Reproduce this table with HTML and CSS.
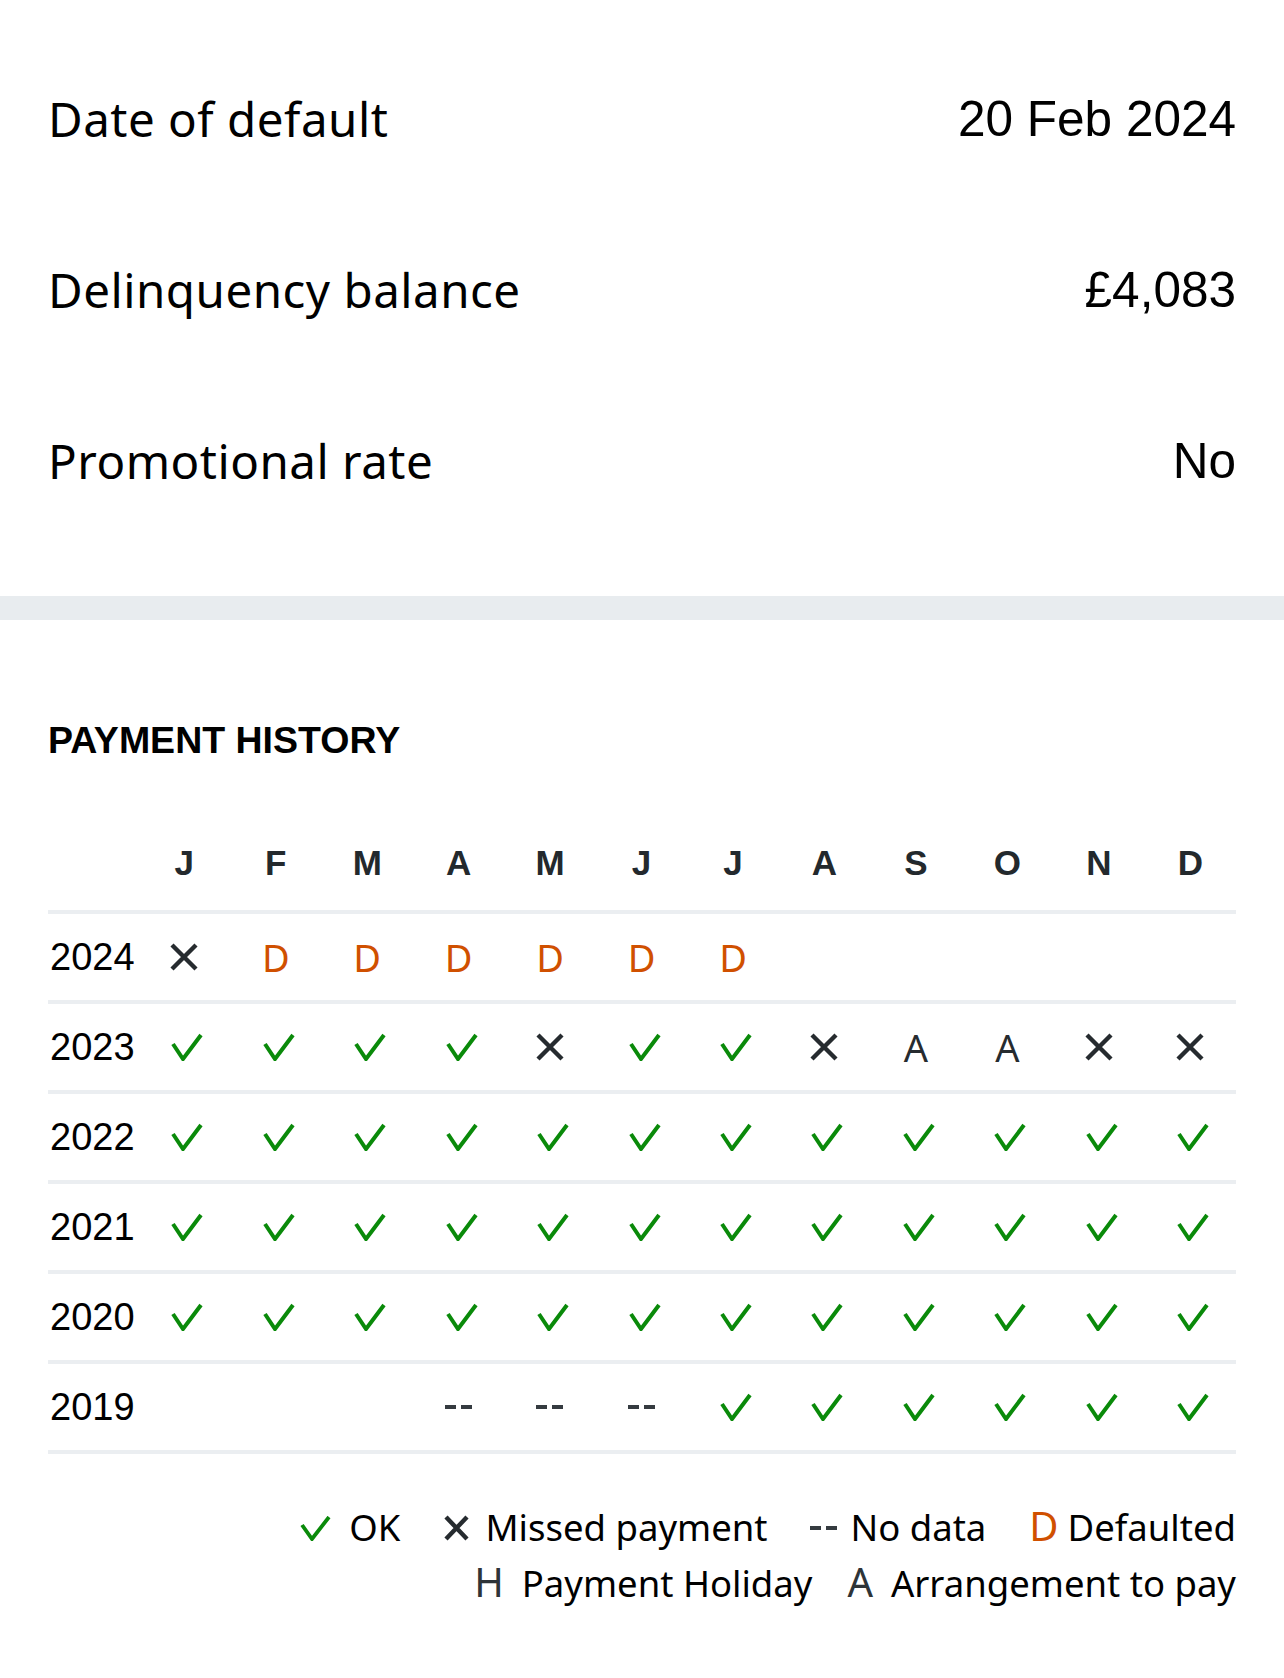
FILE: index.html
```html
<!DOCTYPE html>
<html lang="en">
<head>
<meta charset="utf-8">
<title>Account details</title>
<link rel="stylesheet" href="styles.css">
</head>
<body>
<main class="page">
  <section class="details">
    <div class="detail-row"><span class="label">Date of default</span><span class="value">20 Feb 2024</span></div>
    <div class="detail-row"><span class="label">Delinquency balance</span><span class="value">£4,083</span></div>
    <div class="detail-row"><span class="label">Promotional rate</span><span class="value">No</span></div>
  </section>
  <div class="band"></div>
  <section class="history">
    <h2 class="history-title">PAYMENT HISTORY</h2>
    <div class="grid">
      <div class="grid-row grid-head">
        <span></span>
        <span class="m">J</span><span class="m">F</span><span class="m">M</span><span class="m">A</span><span class="m">M</span><span class="m">J</span>
        <span class="m">J</span><span class="m">A</span><span class="m">S</span><span class="m">O</span><span class="m">N</span><span class="m">D</span>
      </div>
      <div class="grid-row" id="r2024"></div>
      <div class="grid-row" id="r2023"></div>
      <div class="grid-row" id="r2022"></div>
      <div class="grid-row" id="r2021"></div>
      <div class="grid-row" id="r2020"></div>
      <div class="grid-row" id="r2019"></div>
    </div>
    <div class="legend">
      <div class="legend-line">
        <span class="lg-item"><svg class="lg-check" width="31" height="25" viewBox="0 0 31 25"><polyline points="2,9 12,23 29,1" fill="none" stroke="#0a8a0a" stroke-width="3.8"/></svg><span class="lg-text gap18">OK</span></span>
        <span class="lg-item"><svg class="lg-x" width="27" height="26" viewBox="0 0 27 26"><path d="M3 2 L24 24 M24 2 L3 24" stroke="#262b2f" stroke-width="4.4" fill="none"/></svg><span class="lg-text gap15">Missed payment</span></span>
        <span class="lg-item"><svg class="lg-dash" width="28" height="26" viewBox="0 0 28 26"><rect x="0" y="11" width="11" height="4" fill="#353b40"/><rect x="16" y="11" width="11" height="4" fill="#353b40"/></svg><span class="lg-text gap12">No data</span></span>
        <span class="lg-item"><span class="lg-sym lg-orange">D</span><span class="lg-text gap9">Defaulted</span></span>
      </div>
      <div class="legend-line legend-line-2">
        <span class="lg-item"><span class="lg-sym">H</span><span class="lg-text gap18">Payment Holiday</span></span>
        <span class="lg-item"><span class="lg-sym">A</span><span class="lg-text gap18">Arrangement to pay</span></span>
      </div>
    </div>
  </section>
</main>
<script>
(function () {
  var check = '<svg class="ic-check" width="32" height="28" viewBox="0 0 32 28"><polyline points="2,11 12,26 30,2" fill="none" stroke="#0a8a0a" stroke-width="4"/></svg>';
  var cross = '<svg class="ic-x" width="28" height="28" viewBox="0 0 28 28"><path d="M2 2 L26 26 M26 2 L2 26" stroke="#262b2f" stroke-width="4.4" fill="none"/></svg>';
  var dash = '<svg class="ic-dash" width="28" height="26" viewBox="0 0 28 26"><rect x="0" y="11" width="11" height="4" fill="#353b40"/><rect x="16" y="11" width="11" height="4" fill="#353b40"/></svg>';
  var map = {
    'c': check, 'x': cross, '-': dash,
    'D': '<span class="sym sym-orange">D</span>',
    'A': '<span class="sym">A</span>',
    'H': '<span class="sym">H</span>',
    '.': ''
  };
  var data = {
    '2024': 'xDDDDDD.....',
    '2023': 'ccccxccxAAxx',
    '2022': 'cccccccccccc',
    '2021': 'cccccccccccc',
    '2020': 'cccccccccccc',
    '2019': '...---cccccc'
  };
  Object.keys(data).forEach(function (y) {
    var row = document.getElementById('r' + y);
    var html = '<span class="year">' + y + '</span>';
    var s = data[y];
    for (var i = 0; i < 12; i++) {
      html += '<span class="cell">' + map[s.charAt(i)] + '</span>';
    }
    row.innerHTML = html;
  });
})();
</script>
</body>
</html>
```

FILE: styles.css
```css
html, body {
  margin: 0;
  padding: 0;
  background: #ffffff;
}

body {
  font-family: "Noto Sans", "Open Sans", sans-serif;
  color: #000000;
}

.page {
  width: 1284px;
  min-height: 1678px;
}

.details {
  padding: 33px 48px 0;
  margin-bottom: 50px;
}

.detail-row {
  height: 171px;
  display: flex;
  align-items: center;
  justify-content: space-between;
}

.label {
  font-family: "Noto Sans", sans-serif;
  font-size: 47.5px;
  letter-spacing: 0.5px;
  line-height: 64px;
  color: #000;
}

.value {
  font-family: "Liberation Sans", Arial, sans-serif;
  font-size: 49.5px;
  line-height: 64px;
  color: #000;
}

.band {
  height: 24px;
  background: #e8ecef;
}

.history {
  padding: 0 48px;
}

.history-title {
  margin: 100px 0 0;
  font-family: "Liberation Sans", Arial, sans-serif;
  font-weight: 700;
  font-size: 37.5px;
  line-height: 40px;
  color: #000;
}

.grid {
  margin-top: 60px;
}

.grid-row {
  display: grid;
  grid-template-columns: 90.6px repeat(12, 1fr);
  align-items: center;
  height: 86px;
  border-bottom: 4px solid #ebeef1;
}

.grid-head {
  height: 85px;
  padding-bottom: 5px;
}

.m {
  text-align: center;
  font-family: "Liberation Sans", Arial, sans-serif;
  font-weight: 700;
  font-size: 35px;
  color: #23292d;
}

.year {
  font-family: "Liberation Sans", Arial, sans-serif;
  font-size: 38px;
  color: #000;
  padding-left: 2px;
}

.cell {
  display: flex;
  align-items: center;
  justify-content: center;
  height: 86px;
}

.cell svg {
  display: block;
}

.ic-check {
  margin-left: 6px;
}

.sym {
  font-family: "Noto Sans", sans-serif;
  font-size: 38px;
  line-height: 1;
  color: #262b2f;
}

.sym.sym-orange {
  color: #d05000;
}

.legend {
  margin-top: 44px;
}

.legend-line {
  display: flex;
  justify-content: flex-end;
  align-items: baseline;
  height: 56px;
  line-height: 56px;
  gap: 43px;
}

.legend-line-2 {
  gap: 35px;
}

.lg-item {
  display: inline-flex;
  align-items: baseline;
}

.lg-text {
  font-family: "Noto Sans", sans-serif;
  font-size: 36.5px;
  color: #000;
}

.lg-sym {
  font-family: "Noto Sans", sans-serif;
  font-size: 40px;
  color: #2e3438;
}

.lg-sym.lg-orange {
  color: #d05000;
}

.gap18 { margin-left: 18px; }
.gap15 { margin-left: 15px; }
.gap12 { margin-left: 12px; }
.gap9 { margin-left: 9px; }
```
